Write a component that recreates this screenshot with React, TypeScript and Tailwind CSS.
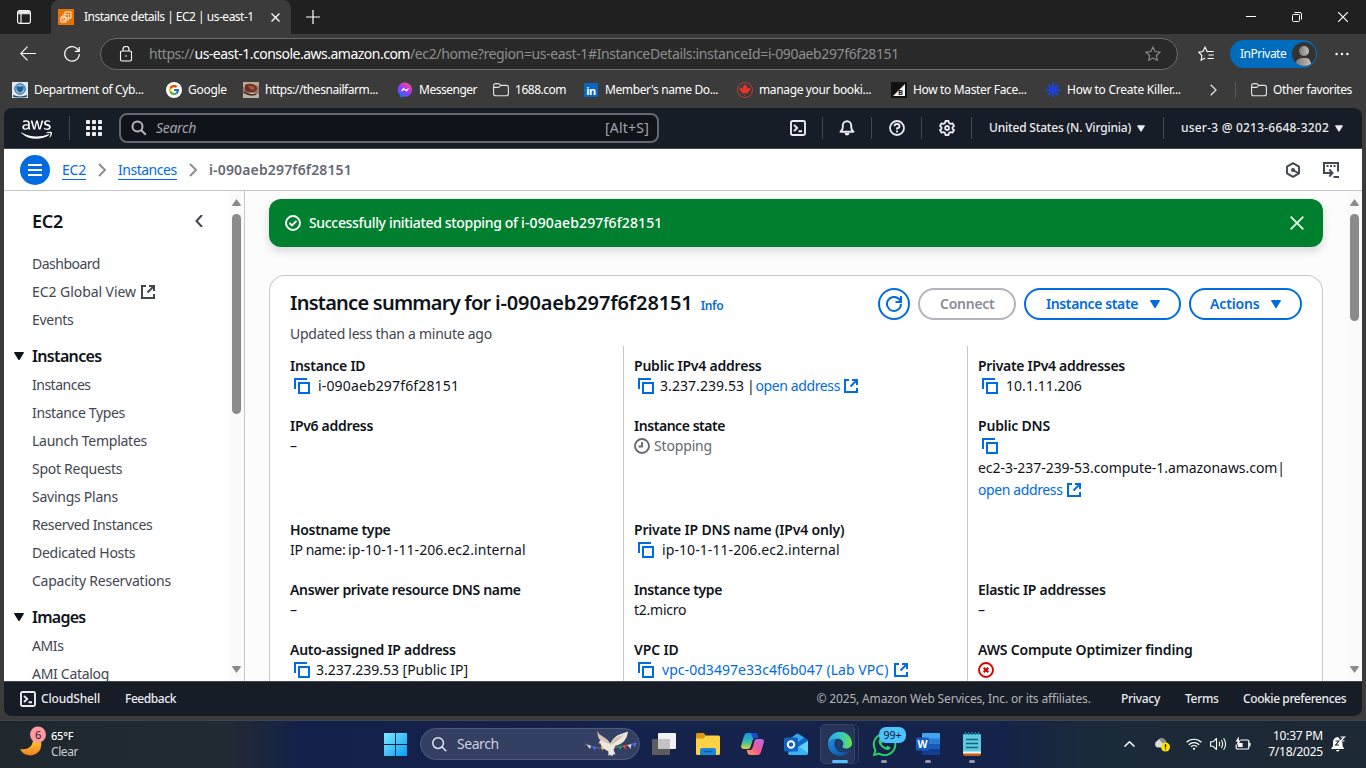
import type { ReactNode } from "react";
import { FaAws, FaCanadianMapleLeaf, FaWhatsapp } from "react-icons/fa";
import { FcGoogle } from "react-icons/fc";

/* ---------- shared glyphs ---------- */

const Copy = () => (
  <svg className="ml-1 h-4 w-4 shrink-0" viewBox="0 0 16 16" fill="none" stroke="#006ce0" strokeWidth="2">
    <path d="M1 11V1h12" />
    <path d="M5 5h10v10H5z" />
  </svg>
);

const External = ({ color = "#006ce0" }: { color?: string }) => (
  <svg className="h-3.5 w-3.5 shrink-0" viewBox="0 0 14 14" fill="none" stroke={color} strokeWidth="2">
    <path d="M5 1H1v12h12V9" />
    <path d="M8 1h5v5M12.600 1.400 6.500 7.500" />
  </svg>
);

const Caret = ({ className }: { className: string }) => (
  <svg className={className} viewBox="0 0 10 8" fill="currentColor">
    <path d="M.8 0h8.400q1.200 0 .6 1L5.800 7.400q-.8 1.100-1.600 0L.2 1q-.6-1 .6-1z" />
  </svg>
);

const Shell = ({ className }: { className: string }) => (
  <svg className={className} viewBox="0 0 16 16" fill="none" stroke="currentColor" strokeWidth="1.900">
    <rect x="1" y="1" width="14" height="14" rx="1.500" />
    <path d="m4 4.800 3.200 3.200L4 11.200M8.500 11.300H12" />
  </svg>
);

const Folder = () => (
  <svg className="h-4 w-4 shrink-0" viewBox="0 0 16 16" fill="none" stroke="#e4e4e4" strokeWidth="1.100">
    <path d="M.6 3.600A2 2 0 0 1 2.600 1.600h2.600q.8 0 1.300.6l1.100 1.200h5.800a2 2 0 0 1 2 2v6.400a2 2 0 0 1-2 2H2.600a2 2 0 0 1-2-2z" />
    <path d="M.6 5.400h4.600q.7 0 1.200-.5l1.200-1.400" />
  </svg>
);

const Divider = () => <div className="h-[22px] w-px shrink-0 bg-[#424650]" />;

/* ---------- browser chrome ---------- */

const TabStrip = () => (
  <div className="flex h-[34px] bg-[#202020] text-white">
    <div className="flex w-[51px] shrink-0 items-center pl-[17px]">
      <svg className="h-3.5 w-3.5" viewBox="0 0 14 14" fill="none" stroke="#fff" strokeWidth="1.100">
        <rect x=".6" y=".6" width="12.800" height="12.800" rx="2.200" />
        <path d="M.6 3.800h12.800M4 3.800v9.600" />
        <path d="M1.500 2.200h11" strokeWidth="2" />
      </svg>
    </div>
    <div className="flex w-60 shrink-0 items-center rounded-t-lg bg-[#3b3b3b] pl-[7px]">
      <svg className="h-4 w-4 shrink-0" viewBox="0 0 16 16">
        <rect width="16" height="16" fill="#e87408" />
        <g fill="none" stroke="#fff" strokeWidth=".9">
          <path d="M7 3h6v6H7z" />
          <path d="M5 5.500h5.500V11H5z" strokeOpacity=".7" />
          <path d="M3 8h5v5H3z" />
        </g>
      </svg>
      <span className="ml-2.5 w-[187px] text-xs tracking-[-0.500px] whitespace-nowrap">Instance details | EC2 | us-east-1</span>
      <svg className="h-[9px] w-[9px]" viewBox="0 0 9 9" stroke="#fff" strokeWidth="1.300">
        <path d="m.5.5 8 8m0-8-8 8" />
      </svg>
    </div>
    <div className="flex flex-1 items-center pl-[15px]">
      <svg className="h-3.5 w-3.5" viewBox="0 0 14 14" stroke="#fff" strokeWidth="1.200">
        <path d="M7 0v14M0 7h14" />
      </svg>
    </div>
    <div className="flex items-center gap-9 pr-[18px]">
      <svg className="h-[10px] w-[10px]" viewBox="0 0 10 10" stroke="#fff">
        <path d="M0 4.500h10" />
      </svg>
      <svg className="h-[10px] w-[10px]" viewBox="0 0 10 10" fill="none" stroke="#fff">
        <rect x=".5" y="2.500" width="7" height="7" rx="1" />
        <path d="M2.500.5H8A1.500 1.500 0 0 1 9.500 2v5.500" />
      </svg>
      <svg className="h-[10px] w-[10px]" viewBox="0 0 10 10" stroke="#fff" strokeWidth="1.200">
        <path d="m0 0 10 10M10 0 0 10" />
      </svg>
    </div>
  </div>
);

const STAR = "m8 1.200 2.100 4.400 4.800.6-3.500 3.300.9 4.800L8 12l-4.300 2.300.9-4.800L1.100 6.200l4.800-.6z";

const AddressRow = () => (
  <div className="flex h-10 items-center bg-[#3b3b3b] text-white">
    <svg className="ml-5 h-4 w-4" viewBox="0 0 16 16" fill="none" stroke="#fff" strokeWidth="1.100">
      <path d="M16 7.500H.8M7.500.7.7 7.500l6.800 6.800" />
    </svg>
    <svg className="ml-7 h-4 w-4" viewBox="0 0 16 16" fill="none" stroke="#fff" strokeWidth="1.200">
      <path d="M14.800 5.200A7.300 7.300 0 1 0 15.300 8M15.200 1v4.300h-4.300" />
    </svg>
    <div className="ml-5 flex h-8 w-[1078px] items-center rounded-full border border-[#6b6b6b] bg-[#292929]">
      <svg className="ml-[18px] h-4 w-3.5" viewBox="0 0 14 16" fill="none" stroke="#fff" strokeWidth="1.100">
        <rect x="1.500" y="5" width="11" height="10" rx="1.500" />
        <path d="M4 5V3.500a3 3 0 0 1 6 0V5" />
        <circle cx="7" cy="10" r=".8" fill="#fff" stroke="none" />
      </svg>
      <div className="ml-4 flex flex-1 text-sm whitespace-nowrap text-[#8e8e8e]">
        <span className="w-[45.500px] tracking-[-0.450px]">https://</span>
        <span className="w-[215.500px] tracking-[-0.510px] text-white">us-east-1.console.aws.amazon.com</span>
        <span className="tracking-[-0.380px]">/ec2/home?region=us-east-1#InstanceDetails:instanceId=i-090aeb297f6f28151</span>
      </div>
      <svg className="mr-4 h-4 w-4" viewBox="0 0 16 16" fill="none" stroke="#8e8e8e" strokeWidth="1.100">
        <path d={STAR} />
      </svg>
    </div>
    <svg className="ml-5 h-4 w-4" viewBox="0 0 16 16" fill="none" stroke="#fff" strokeWidth="1.100">
      <path d="M9.800 5.600H9.200L7 1.200 4.900 5.600.7 6.200l3.200 3.300-.8 4.800L7 12M9.800 5.500h6M10.500 9h5.300M9.500 12.500h6.300" />
    </svg>
    <div className="ml-4 flex h-7 w-[87px] items-center justify-between rounded-full bg-[#006cbe] pr-px pl-2.5">
      <span className="text-xs tracking-[-0.500px]">InPrivate</span>
      <svg className="h-6 w-6" viewBox="0 0 24 24">
        <defs>
          <linearGradient id="person" x1="0" x2="1">
            <stop offset="0" stopColor="#777" />
            <stop offset="1" stopColor="#c5c0b8" />
          </linearGradient>
          <clipPath id="personClip">
            <circle cx="12" cy="12" r="12" />
          </clipPath>
        </defs>
        <g clipPath="url(#personClip)">
          <rect width="24" height="24" fill="#333" />
          <circle cx="12" cy="9" r="5" fill="url(#person)" />
          <path d="M3.500 24q-.5-8 7.500-8h3q5 0 5 8z" fill="url(#person)" />
        </g>
      </svg>
    </div>
    <svg className="ml-[18px] h-1 w-3.5" viewBox="0 0 14 4" fill="#fff">
      <circle cx="1.600" cy="2" r="1.200" />
      <circle cx="7" cy="2" r="1.200" />
      <circle cx="12.400" cy="2" r="1.200" />
    </svg>
  </div>
);

const Bookmark = ({ icon, label, className }: { icon: ReactNode; label: string; className: string }) => (
  <div className={`flex shrink-0 items-center gap-1.5 whitespace-nowrap ${className}`}>
    {icon}
    <span>{label}</span>
  </div>
);

const Bookmarks = () => (
  <div className="flex h-[34px] items-center bg-[#3b3b3b] pb-0.5 pl-3 text-xs text-white">
    <Bookmark
      className="w-[154px] tracking-[-0.370px]"
      label="Department of Cyb..."
      icon={
        <svg className="h-4 w-4" viewBox="0 0 16 16">
          <rect width="16" height="16" fill="#dfe8ef" />
          <circle cx="8" cy="7" r="5.300" fill="#8fb6d3" stroke="#2f6da3" />
          <path d="M4.500 4.500q2-.8 3.500.5 1.500-1.300 3.500-.5.300 4.500-3.500 6-3.800-1.500-3.500-6z" fill="#1a5f9e" />
          <path d="M1 13q7 2.800 14 0v2q-7 1-14 0z" fill="#2b4f70" />
        </svg>
      }
    />
    <Bookmark className="w-[77px] tracking-[-0.280px]" label="Google" icon={<span className="rounded-full bg-white p-0.5"><FcGoogle size={12} /></span>} />
    <Bookmark
      className="w-[154px] tracking-[-0.430px]"
      label="https://thesnailfarm..."
      icon={
        <svg className="h-4 w-4" viewBox="0 0 16 16">
          <rect width="16" height="16" fill="#9b7a68" />
          <path d="M0 0h16v4L9 2 0 5z" fill="#bda896" />
          <path d="M2 3q6-3 11 1 3 4-2 6-6 2-9-2z" fill="#6d3227" />
          <path d="M5 4q4-1 6 1t-1 3q-3 0-5-4z" fill="#a1543f" />
          <path d="M0 12q7-3 16 0v4H0z" fill="#b9b4a4" />
          <path d="M1 9q6 5 13 2l-1 2q-7 2-12-2z" fill="#4e2a22" />
        </svg>
      }
    />
    <Bookmark
      className="w-24 tracking-[-0.490px]"
      label="Messenger"
      icon={
        <svg className="h-4 w-4" viewBox="0 0 16 16">
          <defs>
            <linearGradient id="msg" x1=".2" y1="1" x2=".8" y2="0">
              <stop offset="0" stopColor="#0a7cff" />
              <stop offset=".5" stopColor="#a033ff" />
              <stop offset="1" stopColor="#ff5280" />
            </linearGradient>
          </defs>
          <path d="M8 .6a7.300 7.100 0 1 1-1.900 14l-2.600.9-.3-2.400A7.100 7.100 0 0 1 8 .6z" fill="url(#msg)" />
          <path d="m3.600 9.500 2.700-3.800 2.400 1.700 3.600-1.500-2.700 3.800-2.400-1.700z" fill="#fff" />
        </svg>
      }
    />
    <Bookmark className="w-[90px] tracking-[-0.480px]" label="1688.com" icon={<Folder />} />
    <Bookmark
      className="w-[154px] tracking-[-0.390px]"
      label="Member's name Do..."
      icon={<span className="mx-[1px] flex h-3.5 w-3.5 items-center justify-center rounded-[1px] bg-[#0a66c2] text-[11px] leading-none font-bold tracking-[-0.500px]">in</span>}
    />
    <Bookmark
      className="w-[154px] tracking-[-0.360px]"
      label="manage your booki..."
      icon={
        <span className="flex h-4 w-4 items-center justify-center rounded-full border border-[#b8403a]">
          <FaCanadianMapleLeaf size={12} color="#f03228" />
        </span>
      }
    />
    <Bookmark
      className="w-[154px] tracking-[-0.350px]"
      label="How to Master Face..."
      icon={
        <svg className="h-4 w-4" viewBox="0 0 16 16">
          <rect width="16" height="16" fill="#111" />
          <path d="M14 2v12H2z" fill="#f4f4f4" />
          <text x="7" y="13.200" fontSize="7.500" fontWeight="700" fill="#111">B</text>
        </svg>
      }
    />
    <Bookmark
      className="w-[165px] tracking-[-0.240px]"
      label="How to Create Killer..."
      icon={
        <svg className="h-4 w-4" viewBox="0 0 16 16" stroke="#1c43d6" strokeWidth="2.300" strokeLinecap="round">
          <path d="M8 1.500v13M1.500 8h13M3.500 3.500l9 9M12.500 3.500l-9 9" />
        </svg>
      }
    />
    <svg className="h-3 w-[7px]" viewBox="0 0 7 12" fill="none" stroke="#e4e4e4" strokeWidth="1.300">
      <path d="m.7.7 5.300 5.300-5.300 5.300" />
    </svg>
    <div className="mr-[15px] ml-[18px] h-4 w-px bg-[#5a5a5a]" />
    <Bookmark className="tracking-[-0.410px]" label="Other favorites" icon={<Folder />} />
  </div>
);

/* ---------- AWS console ---------- */

const ConsoleHeader = () => (
  <header className="flex h-[41px] shrink-0 items-center rounded-t-lg border-b border-[#424650] bg-[#161d26] pl-[17px] text-[#ebebf0]">
    <FaAws size={31} className="mt-0.5 w-[31px] shrink-0 text-white" />
    <div className="mr-4 ml-[17px] h-6 w-px bg-[#424650]" />
    <svg className="h-4 w-4" viewBox="0 0 16 16" fill="currentColor">
      {[0, 6, 12].map((y) => [0, 6, 12].map((x) => <rect key={`${x}-${y}`} x={x} y={y} width="4" height="4" rx=".8" />))}
    </svg>
    <div className="ml-[17px] flex h-[30px] w-[540px] items-center rounded-lg border-2 border-[#656871] bg-[#0f141a] px-2.5">
      <svg className="h-4 w-4" viewBox="0 0 16 16" fill="none" stroke="#b4b4bb" strokeWidth="2">
        <circle cx="6.500" cy="6.500" r="5" />
        <path d="m10.300 10.300 4.500 4.500" />
      </svg>
      <span className="ml-[9px] flex-1 text-sm tracking-[-0.300px] text-[#a4a4ad] italic">Search</span>
      <span className="-mr-0.5 text-sm tracking-[0.210px] text-[#a4a4ad]">[Alt+S]</span>
    </div>
    <Shell className="mr-4 ml-[131px] h-4 w-4" />
    <Divider />
    <svg className="mx-4 h-4 w-4" viewBox="0 0 16 16" fill="none" stroke="currentColor" strokeWidth="1.900">
      <path d="M1.500 11.700q2.300-1.700 2.300-4.500V5.500a4.200 4.200 0 0 1 8.400 0v1.700q0 2.800 2.300 4.500z" strokeLinejoin="round" />
      <path d="M5.500 13h5q-.5 2.500-2.500 2.500T5.500 13z" fill="currentColor" stroke="none" />
    </svg>
    <Divider />
    <svg className="mr-4 ml-[17px] h-4 w-4" viewBox="0 0 16 16" fill="none" stroke="currentColor" strokeWidth="1.800">
      <circle cx="8" cy="8" r="7" />
      <path d="M5.500 6.300Q5.500 4 8 4t2.500 2.200Q10.500 8 8 8.300v1.300" />
      <path d="M8 10.600v1.900" />
    </svg>
    <Divider />
    <svg className="mr-4 ml-[17px] h-4 w-4" viewBox="0 0 16 16" fill="none" stroke="currentColor" strokeWidth="1.800">
      <path d="M6.500 1h3l.5 2 1.500.9 2-.6L15 6l-1.500 1.400v1.300L15 10l-1.500 2.700-2-.6-1.500.9-.5 2h-3L6 13l-1.500-.9-2 .6L1 10l1.500-1.300V7.400L1 6l1.500-2.700 2 .6L6 3z" strokeLinejoin="round" />
      <circle cx="8" cy="8" r="2" />
    </svg>
    <Divider />
    <span className="ml-[17px] w-[148px] text-xs font-medium tracking-[-0.190px] whitespace-nowrap">United States (N. Virginia)</span>
    <Caret className="h-[7px] w-2" />
    <div className="ml-[18px]"><Divider /></div>
    <span className="ml-[17px] w-[154px] text-xs font-medium tracking-[0.210px] whitespace-nowrap">user-3 @ 0213-6648-3202</span>
    <Caret className="h-[7px] w-2" />
  </header>
);

const Chevron = () => (
  <svg className="h-3.5 w-[9px]" viewBox="0 0 9 14" fill="none" stroke="#8c8c94" strokeWidth="2">
    <path d="m1 1 6 6-6 6" />
  </svg>
);

const Breadcrumbs = () => (
  <div className="flex h-[42px] shrink-0 items-center border-b border-[#c6c6cd] bg-white pl-4 text-sm">
    <div className="flex h-[30px] w-[30px] items-center justify-center rounded-full bg-[#006ce0]">
      <svg className="h-3 w-3.5" viewBox="0 0 14 12" stroke="#fff" strokeWidth="2">
        <path d="M0 1h14M0 6h14M0 11h14" />
      </svg>
    </div>
    <span className="mr-3 ml-3 h-5 w-6 border-b border-[#006ce0] leading-[19px] tracking-[-0.210px] text-[#006ce0]">EC2</span>
    <Chevron />
    <span className="mr-3 ml-[11px] h-5 w-[59px] border-b border-[#006ce0] leading-[19px] tracking-[-0.480px] text-[#006ce0]">Instances</span>
    <Chevron />
    <span className="ml-[11px] flex-1 font-semibold tracking-[0.150px] text-[#656871]">i-090aeb297f6f28151</span>
    <svg className="h-4 w-4" viewBox="0 0 16 16" fill="none" stroke="#424650" strokeWidth="1.900">
      <path d="m8 1.200 6 3.400v6.800l-6 3.400-6-3.400V4.600z" strokeLinejoin="round" />
      <circle cx="8" cy="8" r="2" fill="#424650" stroke="none" />
      <path d="m8 8 5 3" />
    </svg>
    <svg className="mr-[23px] ml-[22px] h-4 w-4" viewBox="0 0 16 16" fill="none" stroke="#424650" strokeWidth="2">
      <path d="M5 11H1V1h14v8.500" />
      <path d="M3.500 4h2M7 4h2M10.500 4h2" />
      <path d="M4 11h5M6.300 7.500 9.500 11l-3.200 3.500M10.500 15H16" strokeWidth="1.900" />
    </svg>
  </div>
);

const Scrollbar = ({ thumb }: { thumb: string }) => (
  <div className="flex w-[15px] shrink-0 flex-col items-center bg-[#fafafa] pt-2 pb-2">
    <svg className="h-[7px] w-[9px]" viewBox="0 0 9 7" fill="#8b8b8b">
      <path d="M4.500 0 9 6.300 8.500 7h-8L0 6.300z" />
    </svg>
    <div className={`mt-2 w-[9px] rounded-full bg-[#8b8b8b] ${thumb}`} />
    <svg className="mt-auto h-[7px] w-[9px]" viewBox="0 0 9 7" fill="#8b8b8b">
      <path d="M4.500 7 9 .7 8.500 0h-8L0 .7z" />
    </svg>
  </div>
);

const NavLink = ({ children, className }: { children: ReactNode; className: string }) => (
  <div className={`flex h-7 shrink-0 items-center text-sm whitespace-nowrap text-[#424650] ${className}`}>{children}</div>
);

const NavGroup = ({ title, className }: { title: string; className: string }) => (
  <div className="flex h-[30px] shrink-0 items-center">
    <Caret className="-ml-[18px] h-2 w-2.5 text-[#0f141a]" />
    <span className={`ml-2 text-[16px] font-semibold text-[#0f141a] ${className}`}>{title}</span>
  </div>
);

const Sidebar = () => (
  <nav className="flex w-[241px] shrink-0 border-r border-[#c6c6cd] bg-white">
    <div className="flex flex-1 flex-col overflow-hidden pl-7">
      <div className="mt-4 flex h-7 shrink-0 items-center justify-between pr-[26px]">
        <span className="text-lg font-semibold tracking-[-0.280px] text-[#0f141a]">EC2</span>
        <svg className="h-3 w-2" viewBox="0 0 8 12" fill="none" stroke="#424650" strokeWidth="2">
          <path d="M7 0 1.500 6 7 12" />
        </svg>
      </div>
      <div className="mt-[15px] flex flex-col">
        <NavLink className="tracking-[-0.500px]">Dashboard</NavLink>
        <NavLink className="gap-[5px] tracking-[-0.060px]">
          EC2 Global View
          <External color="#424650" />
        </NavLink>
        <NavLink className="tracking-[-0.300px]">Events</NavLink>
      </div>
      <div className="mt-[7px] flex flex-col">
        <NavGroup title="Instances" className="tracking-[-0.650px]" />
        <NavLink className="tracking-[-0.500px]">Instances</NavLink>
        <NavLink className="tracking-[-0.350px]">Instance Types</NavLink>
        <NavLink className="tracking-[-0.250px]">Launch Templates</NavLink>
        <NavLink className="tracking-[-0.270px]">Spot Requests</NavLink>
        <NavLink className="tracking-[-0.250px]">Savings Plans</NavLink>
        <NavLink className="tracking-[-0.390px]">Reserved Instances</NavLink>
        <NavLink className="tracking-[-0.280px]">Dedicated Hosts</NavLink>
        <NavLink className="tracking-[-0.230px]">Capacity Reservations</NavLink>
      </div>
      <div className="mt-[7px] flex flex-col">
        <NavGroup title="Images" className="tracking-[-0.730px]" />
        <NavLink className="tracking-[-0.400px]">AMIs</NavLink>
        <NavLink className="tracking-[-0.300px]">AMI Catalog</NavLink>
      </div>
    </div>
    <Scrollbar thumb="h-[200px]" />
  </nav>
);

const Banner = () => (
  <div className="flex h-12 shrink-0 items-center rounded-xl bg-[#00802f] px-4 text-white shadow-[0_4px_10px_rgba(0,7,22,0.15)]">
    <svg className="h-4 w-4" viewBox="0 0 16 16" fill="none" stroke="#fff" strokeWidth="1.900">
      <circle cx="8" cy="8" r="7" />
      <path d="m4.500 8 2.500 2.500 4.500-4.700" />
    </svg>
    <span className="ml-2 flex-1 text-sm font-medium whitespace-nowrap">
      <span className="tracking-[-0.330px]">Successfully initiated stopping of </span>
      <span className="tracking-[0.120px]">i-090aeb297f6f28151</span>
    </span>
    <svg className="mr-[3px] h-3.5 w-3.5" viewBox="0 0 14 14" stroke="#e6f3ea" strokeWidth="1.900">
      <path d="m.7.7 12.600 12.600m0-12.600L.7 13.300" />
    </svg>
  </div>
);

const Pill = ({ children, className }: { children: ReactNode; className: string }) => (
  <button className={`flex h-8 items-center rounded-full border-2 text-sm font-semibold whitespace-nowrap ${className}`}>{children}</button>
);

const CardHeader = () => (
  <div className="flex h-[70px] shrink-0 justify-between pt-3 pr-5 pl-5">
    <div>
      <div className="flex h-[30px] items-baseline">
        <h1 className="text-xl leading-[29px] font-semibold whitespace-nowrap text-[#0f141a]">
          <span className="tracking-[-0.750px]">Instance summary for </span>
          <span className="tracking-[-0.130px]">i-090aeb297f6f28151</span>
        </h1>
        <span className="ml-2 text-xs font-semibold tracking-[-0.350px] text-[#006ce0]">Info</span>
      </div>
      <p className="mt-1.5 text-sm leading-5 tracking-[-0.270px] text-[#424650]">Updated less than a minute ago</p>
    </div>
    <div className="flex gap-2">
      <Pill className="w-8 justify-center border-[#006ce0] text-[#006ce0]">
        <svg className="h-4 w-4 shrink-0" viewBox="0 0 16 16" fill="none" stroke="currentColor" strokeWidth="2">
          <path d="M15 8a7 7 0 1 1-2-5l1.500 2" />
          <path d="M15 0v6H9.500" />
        </svg>
      </Pill>
      <Pill className="w-[98px] border-[#b4b4bb] pl-5 tracking-[-0.260px] text-[#8c8c94]">Connect</Pill>
      <Pill className="w-[157px] border-[#006ce0] pl-5 tracking-[-0.380px] text-[#006ce0]">
        Instance state
        <Caret className="ml-3 h-2 w-2.5" />
      </Pill>
      <Pill className="w-[113px] border-[#006ce0] pl-[19px] tracking-[-0.150px] text-[#006ce0]">
        Actions
        <Caret className="ml-[11px] h-2 w-2.5" />
      </Pill>
    </div>
  </div>
);

const Field = ({ label, track, tall, children }: { label?: string; track?: string; tall?: boolean; children?: ReactNode }) => (
  <div className={`flex shrink-0 flex-col whitespace-nowrap ${tall ? "h-[104px]" : "h-[60px]"}`}>
    {label && <div className={`h-5 text-sm leading-5 font-semibold ${track ?? ""}`}>{label}</div>}
    {children}
  </div>
);

const Value = ({ children, className = "" }: { children: ReactNode; className?: string }) => (
  <div className={`flex h-5 items-center text-sm leading-5 ${className}`}>{children}</div>
);

const Summary = () => (
  <div className="flex flex-1 text-[#0f141a]">
    <div className="flex w-[353px] shrink-0 flex-col overflow-hidden pt-2.5 pl-5">
      <Field label="Instance ID" track="tracking-[-0.250px]">
        <Value><Copy /><span className="ml-2 tracking-[0.150px]">i-090aeb297f6f28151</span></Value>
      </Field>
      <Field label="IPv6 address" track="tracking-[-0.300px]" tall><Value>–</Value></Field>
      <Field label="Hostname type" track="tracking-[-0.310px]">
        <Value>
          <span className="w-[58px] tracking-[-0.350px]">IP name:</span>
          <span className="tracking-[0.080px]">ip-10-1-11-206.ec2.internal</span>
        </Value>
      </Field>
      <Field label="Answer private resource DNS name" track="tracking-[-0.340px]"><Value>–</Value></Field>
      <Field label="Auto-assigned IP address" track="tracking-[-0.280px]">
        <Value><Copy /><span className="ml-1.5 tracking-[-0.030px]">3.237.239.53 [Public IP]</span></Value>
      </Field>
    </div>
    <div className="flex w-[344px] shrink-0 flex-col overflow-hidden border-l border-[#c6c6cd] pt-2.5 pl-2.5">
      <Field label="Public IPv4 address" track="tracking-[-0.210px]">
        <Value>
          <Copy />
          <span className="ml-1.5 w-[87px] tracking-[0.060px]">3.237.239.53</span>
          <span className="w-[8.500px]">|</span>
          <span className="w-[88.500px] tracking-[-0.390px] text-[#006ce0]">open address</span>
          <External />
        </Value>
      </Field>
      <Field label="Instance state" track="tracking-[-0.450px]" tall>
        <Value>
          <svg className="h-4 w-4" viewBox="0 0 16 16" fill="none" stroke="#656871" strokeWidth="1.900">
            <circle cx="8" cy="8" r="7" />
            <path d="M8 4v4.500H4.500" />
          </svg>
          <span className="ml-1 tracking-[-0.160px] text-[#656871]">Stopping</span>
        </Value>
      </Field>
      <Field label="Private IP DNS name (IPv4 only)" track="tracking-[-0.180px]">
        <Value><Copy /><span className="ml-2 tracking-[0.080px]">ip-10-1-11-206.ec2.internal</span></Value>
      </Field>
      <Field label="Instance type" track="tracking-[-0.380px]"><Value className="tracking-[-0.250px]">t2.micro</Value></Field>
      <Field label="VPC ID" track="tracking-[-0.150px]">
        <Value>
          <Copy />
          <span className="ml-2 w-[232px] tracking-[0.050px] text-[#006ce0]">vpc-0d3497e33c4f6b047 (Lab VPC)</span>
          <External />
        </Value>
      </Field>
    </div>
    <div className="flex flex-1 flex-col overflow-hidden border-l border-[#c6c6cd] pt-2.5 pl-2.5">
      <Field label="Private IPv4 addresses" track="tracking-[-0.310px]">
        <Value><Copy /><span className="ml-2 tracking-[0.040px]">10.1.11.206</span></Value>
      </Field>
      <Field label="Public DNS" track="tracking-[-0.200px]" tall>
        <Value><Copy /></Value>
        <Value className="mt-px h-[22px] tracking-[-0.050px]">
          ec2-3-237-239-53.compute-1.amazonaws.com<span>|</span>
        </Value>
        <Value className="h-[22px]">
          <span className="w-[89px] tracking-[-0.390px] text-[#006ce0]">open address</span>
          <External />
        </Value>
      </Field>
      <Field />
      <Field label="Elastic IP addresses" track="tracking-[-0.280px]"><Value>–</Value></Field>
      <Field label="AWS Compute Optimizer finding" track="tracking-[-0.180px]">
        <Value>
          <svg className="h-4 w-4" viewBox="0 0 16 16" fill="none" stroke="#db0000" strokeWidth="1.900">
            <circle cx="8" cy="8" r="7" />
            <path d="m5.700 5.700 4.600 4.600m0-4.600-4.600 4.600" strokeWidth="2.200" />
          </svg>
        </Value>
      </Field>
    </div>
  </div>
);

const ConsoleFooter = () => (
  <footer className="flex h-[35px] shrink-0 items-center rounded-b-lg border-t border-[#424650] bg-[#161d26] pl-4 text-xs font-medium whitespace-nowrap text-[#ebebf0]">
    <Shell className="h-4 w-4" />
    <span className="ml-[5px] w-[84px] tracking-[-0.170px]">CloudShell</span>
    <span className="flex-1 tracking-[-0.430px]">Feedback</span>
    <span className="w-[304.500px] font-normal tracking-[-0.160px] text-[#b4b4bb]">© 2025, Amazon Web Services, Inc. or its affiliates.</span>
    <span className="w-16 tracking-[-0.290px]">Privacy</span>
    <span className="w-[58px] tracking-[-0.300px]">Terms</span>
    <span className="w-[119px] tracking-[-0.410px]">Cookie preferences</span>
  </footer>
);

/* ---------- Windows taskbar ---------- */

const Dove = () => (
  <svg className="h-[26px] w-[52px]" viewBox="0 0 52 26">
    <path d="M0 13q13 6 26 4t26-5" fill="none" stroke="#8c93a8" strokeWidth=".6" />
    <path d="m1.500 13.500 4.500 1.200-1 3.500z" fill="#d8d4cc" />
    <path d="m7 15 4.500.8-1.800 4z" fill="#3f6bf0" />
    <path d="m15.500 15.500 4 .3-1.800 4z" fill="#f4b62c" />
    <path d="m32.500 15 4.500-.6-1.500 4.600z" fill="#1f9c4f" />
    <path d="m37.500 14.500 4-.6-1.200 4.600z" fill="#e8403c" />
    <path d="m42.500 14 4-.8-1 4.800z" fill="#d8d4cc" />
    <path d="m47 13 4.500-1L50 16.500z" fill="#3f6bf0" />
    <path d="M12.500 0q1 3.500 4.500 5 6 3 8.500 8l-4 2-5.500-4.500Q12 6 12.500 0z" fill="#d3c6b9" />
    <path d="M14 12q0-2.500 2.500-2.500 2 .3 3.500 2l5 1.500Q28 7 33 4l10-3.500q-1 8-6 11.500-3 2-7 3 0 2-1.500 3.500l2 5-1.800-.4L27.500 25l-2-1-2 .8-.2-4.500-2-1q-5-2.800-5.800-6.800z" fill="#eee7dd" />
    <path d="M26 13q2-5 7.500-7.500L39 3.500Q35 9 26 14z" fill="#cfc2b5" />
    <path d="m14 11.500-1.200 1.600 1.900-.4z" fill="#e86b3a" />
  </svg>
);

const Edge = () => (
  <svg className="h-6 w-6" viewBox="0 0 24 24">
    <defs>
      <linearGradient id="edgeTop" x1="0" y1=".5" x2="1" y2=".5">
        <stop offset="0" stopColor="#2ba8e8" />
        <stop offset=".55" stopColor="#35c7c5" />
        <stop offset="1" stopColor="#6be046" />
      </linearGradient>
      <linearGradient id="edgeBase" x1="0" y1="0" x2="1" y2="1">
        <stop offset="0" stopColor="#1a8fe0" />
        <stop offset="1" stopColor="#0c4ea3" />
      </linearGradient>
    </defs>
    <path d="M0 12A12 12 0 0 1 24 11.500C24 15 21 16.500 18 16.500c-3 0-4-1.200-3.400-2.200 2.200-3.500-.6-8-5.600-7.600C4.500 7 1 9 0 12z" fill="url(#edgeTop)" />
    <path d="M0 12.500C.5 8.500 4.500 6.500 8.500 6.800 5.500 9 6 15 9 18c3.500 3.500 9 3 12.800.6A12 12 0 0 1 0 12.500z" fill="url(#edgeBase)" />
    <path d="M12.500 8.500C8 9.500 8 15 11 18c2.600 2.400 7 2.600 10.800.6.6-.4.200-1-.5-.7-3.300 1.200-9.300.2-8.800-4.400.1-1 .8-1.600 1.500-1.800q.3-2-1.500-3.200z" fill="#16407c" />
  </svg>
);

const TaskApp = ({ children, className = "" }: { children: ReactNode; className?: string }) => (
  <div className={`relative flex h-10 w-11 shrink-0 items-center justify-center ${className}`}>{children}</div>
);

const Running = () => <span className="absolute bottom-px left-[19px] h-[3px] w-1.5 rounded-full bg-[#9298a8]" />;

const Taskbar = () => (
  <div className="flex h-12 shrink-0 items-center border-t border-[#3c4450] bg-[linear-gradient(90deg,#20282e_0,#212a33_230px,#13214a_300px,#15224c_640px,#152249_1000px,#1b2a3a_1090px,#1d2933_1366px)] pb-px text-white">
    <div className="flex w-[362px] shrink-0 items-center pl-5">
      <svg className="-mt-1 h-8 w-[27px]" viewBox="0 0 27 32">
        <defs>
          <linearGradient id="moon" x1="0" y1="0" x2="0" y2="1">
            <stop offset="0" stopColor="#ffc42e" />
            <stop offset="1" stopColor="#f08022" />
          </linearGradient>
        </defs>
        <path d="M21 15q2 12-10 14.500Q3 29.500 0 23q11 2 13-8z" fill="url(#moon)" />
        <circle cx="18" cy="8.500" r="8" fill="#ff99a4" />
        <text x="15" y="12.500" fontSize="11" fill="#1c1c1c">6</text>
      </svg>
      <div className="ml-1 text-xs leading-4 tracking-[-0.430px]">
        <div className="text-[11px] font-medium tracking-[-0.200px]">65°F</div>
        <div className="text-[#c9cdd3]">Clear</div>
      </div>
    </div>
    <div className="flex w-[58px] shrink-0 items-center pl-[22px]">
      <svg className="h-[23px] w-[23px]" viewBox="0 0 23 23">
        <defs>
          <linearGradient id="win" x1="0" y1="0" x2="23" y2="23" gradientUnits="userSpaceOnUse">
            <stop offset="0" stopColor="#7deaff" />
            <stop offset="1" stopColor="#0a9bf5" />
          </linearGradient>
        </defs>
        <path d="M0 0h11v11H0zM12 0h11v11H12zM0 12h11v11H0zM12 12h11v11H12z" fill="url(#win)" />
      </svg>
    </div>
    <div className="flex h-8 w-[220px] shrink-0 items-center rounded-full border border-[#4d5a7c] bg-[#333f63] pr-0.5 pl-[11px]">
      <svg className="h-[15px] w-[15px]" viewBox="0 0 16 16" fill="none" stroke="#e3e6ee" strokeWidth="1.600">
        <circle cx="6.500" cy="6.500" r="5.700" />
        <path d="m10.700 10.700 4 4" strokeLinecap="round" />
      </svg>
      <span className="ml-2.5 flex-1 text-sm tracking-[-0.450px] text-[#ccd0da]">Search</span>
      <Dove />
    </div>
    <TaskApp className="ml-0.5">
      <svg className="h-[23px] w-6" viewBox="0 0 24 23">
        <rect y="6" width="18" height="16" rx="1" fill="#5c5c5e" />
        <rect x="6" width="18" height="16" rx="1" fill="#f1f1f3" />
        <path d="M6 6h12v10H6z" fill="#c3c3c6" />
      </svg>
    </TaskApp>
    <TaskApp>
      <svg className="h-[22px] w-6" viewBox="0 0 24 22">
        <path d="M0 1.500Q0 0 1.500 0h6l2.500 2.500V6H0z" fill="#d99a0b" />
        <path d="M0 5.500h7.500L10 2.500h12.500Q24 2.500 24 4v16.500q0 1.500-1.500 1.500h-21Q0 22 0 20.500z" fill="#ffd147" />
        <path d="M4 22v-5q0-2 2-2h12q2 0 2 2v5z" fill="#1a86d8" />
        <path d="M7.500 18.500h9" stroke="#0a5ba6" strokeWidth="1.500" />
      </svg>
    </TaskApp>
    <TaskApp>
      <svg className="h-[22px] w-[23px]" viewBox="0 0 23 22">
        <defs>
          <linearGradient id="cpA" x1="0" y1="0" x2="0" y2="1">
            <stop offset="0" stopColor="#1b8df0" />
            <stop offset=".55" stopColor="#35c3a5" />
            <stop offset="1" stopColor="#f0c832" />
          </linearGradient>
          <linearGradient id="cpB" x1="1" y1="0" x2="0" y2="1">
            <stop offset="0" stopColor="#b06af0" />
            <stop offset=".5" stopColor="#f0589a" />
            <stop offset="1" stopColor="#ff9a4a" />
          </linearGradient>
        </defs>
        <path d="M6 0h8q2 0 2.500 2l.8 3h-3q-2 0-2.600 2L9.500 14q-.6 2-2.500 2H3q-3.500 0-2.800-3.500L3 3q.8-3 3-3z" fill="url(#cpA)" />
        <path d="M17 22H9.500Q7 22 6.500 20l-.8-3H9q2 0 2.500-2l2-7q.6-2 2.500-2h4q3.500 0 2.800 3.500L20 19q-.8 3-3 3z" fill="url(#cpB)" />
        <path d="M10 0h4q2 0 2.500 2l.8 3h-3q-1.500 0-2.200 1z" fill="#1d49c8" />
      </svg>
    </TaskApp>
    <TaskApp>
      <svg className="h-[22px] w-6" viewBox="0 0 24 22">
        <path d="M4 7 14 0l10 7v13q0 2-2 2H6q-2 0-2-2z" fill="#1269c4" />
        <path d="m5 6.500 8-5.700 7 3.700-6 4.500H5z" fill="#35a9ea" />
        <path d="m4 20 20-12v12q0 2-2 2H6q-2 0-2-2z" fill="#35b5f0" />
        <path d="M24 20 15 13.500 24 8z" fill="#63d2fb" />
        <rect y="4.500" width="14" height="14" rx="1.500" fill="#0f62c0" />
        <circle cx="7" cy="11.500" r="3.200" fill="none" stroke="#fff" strokeWidth="2" />
      </svg>
    </TaskApp>
    <TaskApp>
      <span className="absolute inset-y-0 left-0.5 w-[35px] rounded-[5px] border border-[#36446b] bg-[#273458]" />
      <span className="absolute inset-y-0 left-[30px] w-[11px] rounded-r-[5px] border-y border-r border-[#2f3c62]" />
      <span className="relative"><Edge /></span>
      <span className="absolute bottom-px left-3.5 h-[3px] w-4 rounded-full bg-[#4cc2ff]" />
    </TaskApp>
    <TaskApp>
      <FaWhatsapp size={27} color="#25d366" />
      <span className="absolute top-[3px] left-[17px] flex h-4 w-[27px] items-center justify-center rounded-[7px] bg-[#4cc2ff] text-[10.500px] leading-none text-[#0b1526]">99+</span>
      <Running />
    </TaskApp>
    <TaskApp>
      <svg className="h-[22px] w-6" viewBox="0 0 24 22">
        <path d="M6 1q0-1 1-1h16q1 0 1 1v5H6z" fill="#41a5ee" />
        <path d="M6 5.500h18V11H6z" fill="#2b7cd3" />
        <path d="M6 11h18v5.500H6z" fill="#185abd" />
        <path d="M6 16.500h18V21q0 1-1 1H7q-1 0-1-1z" fill="#103f91" />
        <rect y="4.500" width="13" height="13" rx="1.200" fill="#185abd" />
        <text x="1.500" y="14.800" fontSize="10.500" fontWeight="700" fill="#fff" textLength="10" lengthAdjust="spacingAndGlyphs">W</text>
      </svg>
      <Running />
    </TaskApp>
    <TaskApp>
      <svg className="h-6 w-[18px]" viewBox="0 0 18 24">
        <path d="M0 3q0-1 1-1h16q1 0 1 1v18H0z" fill="#5ecbe0" />
        <path d="M0 20h18v2q0 2-2 2H2q-2 0-2-2z" fill="#c8611d" />
        <path d="M0 19.500h18v2H0z" fill="#f2f2f2" />
        <path d="M2.500 0v3M5.700 0v3M9 0v3M12.300 0v3M15.500 0v3" stroke="#1a7f9a" strokeWidth="1.500" />
        <path d="M3 7.500h12M3 11.500h12M3 15.500h12" stroke="#14657f" strokeWidth="1.600" />
      </svg>
      <Running />
    </TaskApp>
    <div className="ml-auto flex shrink-0 items-center pr-5">
      <svg className="mr-[19px] h-1.5 w-[11px]" viewBox="0 0 11 6" fill="none" stroke="#fff" strokeWidth="1.500">
        <path d="M.5 5.500 5.500.8l5 4.700" />
      </svg>
      <svg className="mr-4 h-4 w-4" viewBox="0 0 16 16">
        <path d="M3.500 11.500A3.500 3.500 0 0 1 3 5q1.500-3 5-2.500 3 .2 4 3.500l-4 5.500z" fill="#dcdcdc" />
        <path d="M5 3q3-2 5.500.5 2 1.500 2.500 4L8 7z" fill="#8d8f92" />
        <circle cx="11.500" cy="11" r="4.500" fill="#fde100" />
        <path d="M11.500 8.300v3.200M11.500 12.400v1.200" stroke="#111" strokeWidth="1.300" />
      </svg>
      <svg className="mr-2 h-3 w-4" viewBox="0 0 16 12" fill="none" stroke="#fff" strokeWidth="1.200">
        <path d="M.6 4.300a10.500 10.500 0 0 1 14.800 0M2.800 6.700a7.400 7.400 0 0 1 10.400 0M5 8.900a4.300 4.300 0 0 1 6 0" />
        <circle cx="8" cy="10.800" r="1.100" fill="#fff" stroke="none" />
      </svg>
      <svg className="mr-[7px] h-3.5 w-[17px]" viewBox="0 0 17 14" fill="none" stroke="#fff" strokeWidth="1.100">
        <path d="M.6 4.700h2.600L6.500 1.500v11L3.200 9.300H.6z" strokeLinejoin="round" />
        <path d="M9 4.800q1.300 2.200 0 4.400M11.300 3q2.700 4 0 8M13.600 1.300q4 5.700 0 11.400" />
      </svg>
      <svg className="mr-4 h-3.5 w-[17px]" viewBox="0 0 16 14" fill="none" stroke="#fff" strokeWidth="1.200">
        <path d="M6 3h7q1.300 0 1.300 1.300v6.400q0 1.300-1.300 1.300H3q-1.300 0-1.300-1.300V7.500M15.400 5.800v3.400" />
        <path d="M4 9.500V6.500h3.500v3z" fill="#fff" />
        <path d="M4.500-.5 1 4.500h2.200L2.200 8.500 6.500 3.400H4.200z" fill="#fff" stroke="none" />
      </svg>
      <div className="w-[56px] text-right text-xs leading-4 tracking-[-0.240px] whitespace-nowrap">
        <div>10:37 PM</div>
        <div>7/18/2025</div>
      </div>
      <svg className="ml-2 h-4 w-[15px]" viewBox="0 0 15 16">
        <path d="M7 1Q2 1.500 2 6.500V10L.3 12.500V13H13v-.5L11.500 10V7z" fill="#fff" />
        <path d="M5 14h3.500q-.5 1.500-1.700 1.500T5 14z" fill="#fff" />
        <path d="M4.500 5H8l-3.500 4H8" fill="none" stroke="#1d2933" strokeWidth="1.100" />
        <path d="M9.500 1h4l-4 4h4" fill="none" stroke="#fff" strokeWidth="1.200" />
      </svg>
    </div>
  </div>
);

export default function App() {
  return (
    <div className="flex h-[768px] w-[1366px] flex-col overflow-hidden bg-[#3b3b3b] font-['Noto_Sans',sans-serif]">
      <TabStrip />
      <AddressRow />
      <Bookmarks />
      <div className="mx-1 mb-1 flex h-[608px] flex-col">
        <ConsoleHeader />
        <Breadcrumbs />
        <div className="flex min-h-0 flex-1 bg-[#fcfcfd]">
          <Sidebar />
          <main className="flex min-w-0 flex-1 flex-col overflow-hidden pt-2 pr-6 pl-6">
            <Banner />
            <section className="mt-7 flex min-h-0 flex-1 flex-col overflow-hidden rounded-t-2xl border border-b-0 border-[#c6c6cd] bg-white">
              <CardHeader />
              <Summary />
            </section>
          </main>
          <Scrollbar thumb="h-[107px]" />
        </div>
        <ConsoleFooter />
      </div>
      <Taskbar />
    </div>
  );
}
